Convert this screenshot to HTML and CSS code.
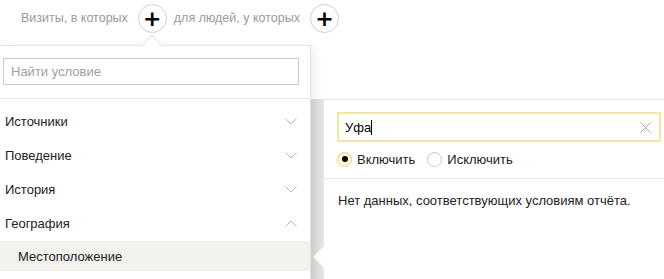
FILE: index.html
```html
<!DOCTYPE html>
<html lang="ru">
<head>
  <meta charset="UTF-8" />
  <meta name="viewport" content="width=device-width, initial-scale=1.0"/>
  <title>Сегментация</title>
  <link rel="stylesheet" href="styles.css">
</head>
<body>

  <div class="filter-bar">
    <span class="filter-label">Визиты, в которых</span>
    <button class="add-btn">+</button>
    <span class="filter-label">для людей, у которых</span>
    <button class="add-btn">+</button>
  </div>

  <div class="workspace">
    <div class="menu">
      <div class="menu-search">
        <input type="text" placeholder="Найти условие">
      </div>
      <ul class="menu-list">
        <li class="menu-item">Источники
          <svg class="chevron" width="12" height="7" viewBox="0 0 12 7"><path d="M0.5 0.5 L6 6 L11.5 0.5" /></svg>
        </li>
        <li class="menu-item">Поведение
          <svg class="chevron" width="12" height="7" viewBox="0 0 12 7"><path d="M0.5 0.5 L6 6 L11.5 0.5" /></svg>
        </li>
        <li class="menu-item">История
          <svg class="chevron" width="12" height="7" viewBox="0 0 12 7"><path d="M0.5 0.5 L6 6 L11.5 0.5" /></svg>
        </li>
        <li class="menu-item">География
          <svg class="chevron" width="12" height="7" viewBox="0 0 12 7"><path d="M0.5 6.5 L6 1 L11.5 6.5" /></svg>
        </li>
        <li class="menu-sub selected">Местоположение</li>
      </ul>
    </div>

    <div class="details">
      <div class="rail"></div>
      <div class="pane">
        <div class="pane-head">
          <div class="geo-input">
            <span class="geo-value">Уфа</span><span class="caret"></span>
            <svg class="clear" width="11" height="11" viewBox="0 0 11 11"><path d="M0.5 0.5 L10.5 10.5 M10.5 0.5 L0.5 10.5" /></svg>
          </div>
          <div class="radios">
            <label class="radio"><span class="radio-box checked"></span>Включить</label>
            <label class="radio"><span class="radio-box"></span>Исключить</label>
          </div>
        </div>
        <div class="pane-body">Нет данных, соответствующих условиям отчёта.</div>
      </div>
    </div>
  </div>

</body>
</html>
```

FILE: styles.css
```css
html, body {
  margin: 0;
  height: 279px;
  overflow: hidden;
}

body {
  background: #ffffff;
  color: #222222;
  font-family: "Liberation Sans", Arial, sans-serif;
  font-size: 13px;
}

/* top line with the two "+" buttons */
.filter-bar {
  display: flex;
  align-items: center;
  height: 28px;
  padding: 4px 0 13px 21px;
}

.filter-label {
  color: #999999;
  font-size: 12.5px;
}

.add-btn {
  width: 29px;
  height: 29px;
  margin: 0 7px 0 10px;
  padding: 0;
  border: 1px solid #d0d0d0;
  border-radius: 50%;
  background: #ffffff;
  color: #000000;
  font-family: "DejaVu Sans", sans-serif;
  font-size: 22px;
  font-weight: bold;
  line-height: 25px;
}

.workspace {
  display: flex;
  height: 240px;
}

/* left dropdown */
.menu {
  position: relative;
  z-index: 1;
  width: 310px;
  flex: none;
  background: #ffffff;
  border-top: 1px solid #e3e3e3;
  border-right: 1px solid #e3e3e3;
  box-shadow: 3px 2px 10px rgba(0, 0, 0, 0.08);
}

.menu::before {
  content: "";
  position: absolute;
  top: -8px;
  left: 144px;
  width: 15px;
  height: 15px;
  background: #ffffff;
  border-top: 1px solid #e3e3e3;
  border-left: 1px solid #e3e3e3;
  transform: rotate(45deg);
}

.menu-search {
  padding: 12px 11px 13px 3px;
  border-bottom: 1px solid #e6e6e6;
}

.menu-search input {
  display: block;
  box-sizing: border-box;
  width: 100%;
  height: 27px;
  margin: 0;
  padding: 0 7px;
  border: 1px solid #cccccc;
  font-family: inherit;
  font-size: 13px;
  color: #222222;
  outline: none;
}

.menu-search input::placeholder {
  color: #a0a0a0;
}

.menu-list {
  list-style: none;
  margin: 0;
  padding: 5px 0 0;
}

.menu-item {
  display: flex;
  align-items: center;
  justify-content: space-between;
  height: 34px;
  padding: 0 13px 0 5px;
}

.chevron {
  fill: none;
  stroke: #b8b8b8;
  stroke-width: 1;
}

.menu-sub {
  display: flex;
  align-items: center;
  height: 30px;
  margin-top: 1px;
  padding-left: 18px;
}

.menu-sub.selected {
  background: #f2f1ee;
}

/* right panel */
.details {
  flex: 1;
  display: flex;
  padding-top: 54px;
}

.rail {
  width: 13px;
  flex: none;
  background: linear-gradient(to right, #d8d8d8, #e6e6e6);
}

.pane {
  position: relative;
  flex: 1;
  background: #ffffff;
  border-top: 1px solid #e6e6e6;
}

.pane::before {
  content: "";
  position: absolute;
  left: -11px;
  top: 146px;
  border-right: 11px solid #ffffff;
  border-top: 11px solid transparent;
  border-bottom: 11px solid transparent;
}

.pane-head {
  padding: 12px 3px 9px 13px;
  border-bottom: 1px solid #e8e8e8;
}

.geo-input {
  display: flex;
  align-items: center;
  box-sizing: border-box;
  height: 30px;
  padding: 0 8px 0 6px;
  border: 2px solid #f1e6a2;
}

.geo-value {
  color: #000000;
}

.caret {
  width: 1px;
  height: 15px;
  background: #000000;
}

.clear {
  margin-left: auto;
  fill: none;
  stroke: #a8a8a8;
  stroke-width: 1;
}

.radios {
  display: flex;
  align-items: center;
  gap: 12px;
  height: 20px;
  margin-top: 7px;
}

.radio {
  display: flex;
  align-items: center;
  gap: 5px;
  color: #222222;
}

.radio-box {
  position: relative;
  box-sizing: border-box;
  width: 15px;
  height: 15px;
  border: 1px solid #cccccc;
  border-radius: 50%;
  box-shadow: inset 0 1px 1px rgba(0, 0, 0, 0.06);
}

.radio-box.checked {
  border-color: #e3d27a;
  background: #fff9dc;
}

.radio-box.checked::after {
  content: "";
  position: absolute;
  left: 3.5px;
  top: 3.5px;
  width: 6px;
  height: 6px;
  border-radius: 50%;
  background: #000000;
}

.pane-body {
  padding: 14px 14px;
  line-height: 16px;
}
```
